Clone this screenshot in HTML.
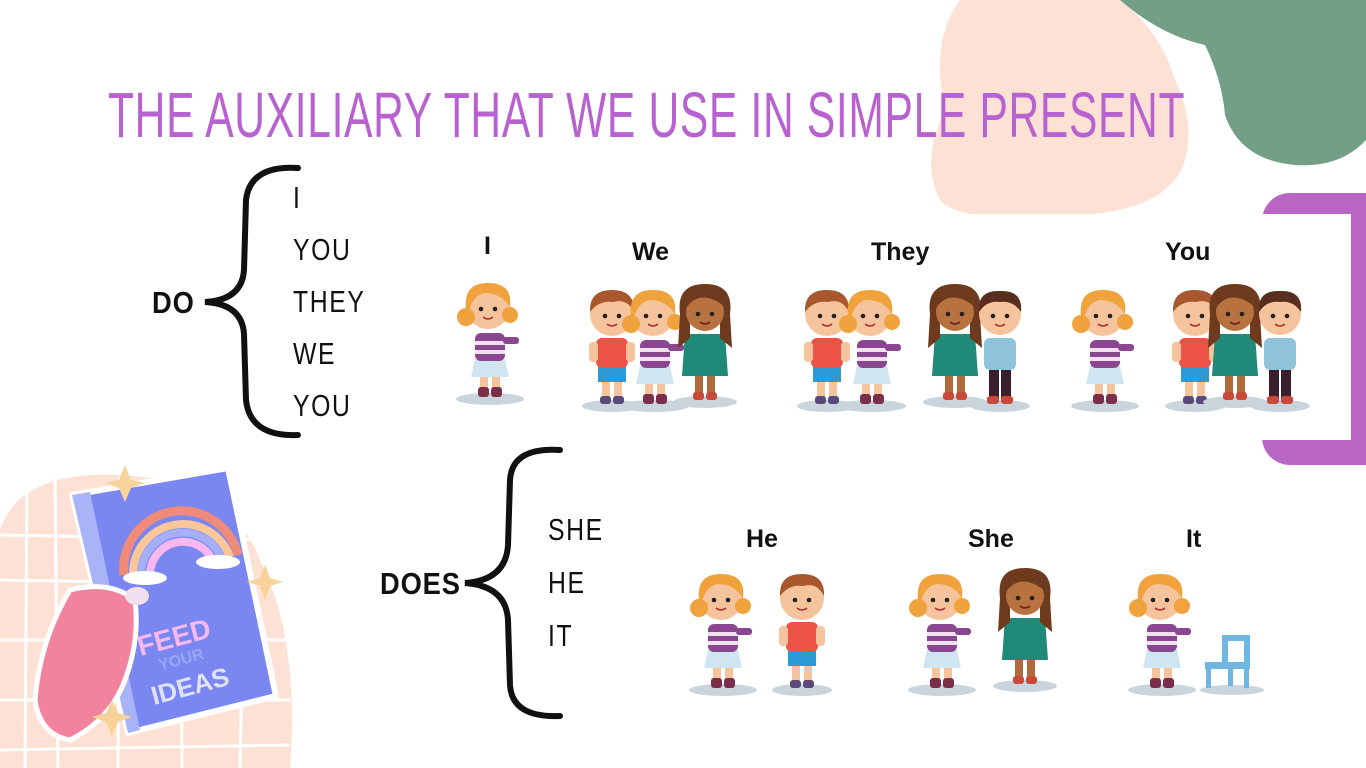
<!DOCTYPE html>
<html><head><meta charset="utf-8"><style>
*{margin:0;padding:0;box-sizing:border-box}
body{width:1366px;height:768px;overflow:hidden;background:#fff;position:relative;font-family:"Liberation Sans",sans-serif}
.t{position:absolute;font-family:"Liberation Sans Narrow","Liberation Sans",sans-serif;color:#111;font-size:31px;letter-spacing:2px;font-weight:300;transform-origin:0 0;transform:scaleX(0.8);white-space:nowrap}
.b{font-weight:bold;letter-spacing:1px;transform:scaleX(0.88)}
.title{position:absolute;left:108px;top:78px;font-family:"Liberation Sans Narrow","Liberation Sans",sans-serif;font-size:64px;color:#b862cf;white-space:nowrap;transform-origin:0 0;transform:scaleX(0.665);letter-spacing:1px}
.lab{position:absolute;font-family:"Liberation Sans",sans-serif;font-weight:bold;font-size:25px;color:#111}
svg{position:absolute;left:0;top:0}
</style></head><body>
<svg width="1366" height="768">
<defs>
<symbol id="girl" viewBox="0 0 70 130">
<ellipse cx="35" cy="124" rx="34" ry="6" fill="#c9d4dc"/>
<rect x="25" y="98" width="8" height="22" fill="#f6c49c"/><rect x="37" y="98" width="8" height="22" fill="#f6c49c"/>
<rect x="23" y="112" width="11" height="10" rx="3" fill="#7b2e4a"/><rect x="36" y="112" width="11" height="10" rx="3" fill="#7b2e4a"/>
<path d="M20 84 L50 84 L54 102 L16 102Z" fill="#cfe6f2"/>
<rect x="20" y="58" width="30" height="28" rx="6" fill="#8a4690"/>
<rect x="20" y="66" width="30" height="4" fill="#f0e0f0"/><rect x="20" y="75" width="30" height="4" fill="#f0e0f0"/>
<rect x="48" y="62" width="16" height="7" rx="3" fill="#8a4690"/>
<circle cx="33" cy="32" r="22" fill="#f6c49c"/>
<path d="M11 34 Q8 8 33 8 Q58 8 55 32 Q46 18 30 18 Q18 20 14 36Z" fill="#f0a23c"/>
<circle cx="11" cy="42" r="9" fill="#f0a23c"/><circle cx="55" cy="40" r="8" fill="#f0a23c"/>
<circle cx="26" cy="34" r="2.3" fill="#222"/><circle cx="40" cy="34" r="2.3" fill="#222"/>
<path d="M28 42 Q33 46 38 42" stroke="#a33" stroke-width="1.5" fill="none"/>
</symbol>
<symbol id="boy" viewBox="0 0 70 130">
<ellipse cx="35" cy="124" rx="30" ry="6" fill="#c9d4dc"/>
<rect x="25" y="96" width="8" height="24" fill="#f6c49c"/><rect x="37" y="96" width="8" height="24" fill="#f6c49c"/>
<rect x="23" y="114" width="11" height="8" rx="3" fill="#5a4a7a"/><rect x="36" y="114" width="11" height="8" rx="3" fill="#5a4a7a"/>
<rect x="21" y="82" width="28" height="18" fill="#2d9ad8"/>
<rect x="19" y="56" width="32" height="30" rx="6" fill="#ec5346"/>
<rect x="12" y="60" width="9" height="20" rx="4" fill="#f6c49c"/><rect x="49" y="60" width="9" height="20" rx="4" fill="#f6c49c"/>
<circle cx="35" cy="32" r="22" fill="#f6c49c"/>
<path d="M13 30 Q12 8 35 8 Q58 8 57 30 Q50 16 36 20 Q22 18 13 30Z" fill="#a9582e"/>
<circle cx="28" cy="34" r="2.3" fill="#222"/><circle cx="42" cy="34" r="2.3" fill="#222"/>
<path d="M30 42 Q35 46 40 42" stroke="#a33" stroke-width="1.5" fill="none"/>
</symbol>
<symbol id="dgirl" viewBox="0 0 70 130">
<ellipse cx="35" cy="124" rx="32" ry="6" fill="#c9d4dc"/>
<rect x="25" y="94" width="8" height="26" fill="#b06a3c"/><rect x="37" y="94" width="8" height="26" fill="#b06a3c"/>
<rect x="23" y="114" width="11" height="8" rx="3" fill="#c8483a"/><rect x="36" y="114" width="11" height="8" rx="3" fill="#c8483a"/>
<path d="M15 56 L55 56 L58 98 L12 98Z" fill="#1f8a78"/>
<path d="M10 36 Q6 6 35 6 Q64 6 60 36 L62 70 L50 60 L50 30 L20 30 L20 60 L8 70Z" fill="#6e3a1e"/>
<circle cx="35" cy="34" r="19" fill="#b8723f"/>
<path d="M16 30 Q30 10 54 28 Q50 14 35 12 Q20 14 16 30Z" fill="#6e3a1e"/>
<circle cx="28" cy="36" r="2.3" fill="#222"/><circle cx="42" cy="36" r="2.3" fill="#222"/>
<path d="M30 44 Q35 48 40 44" stroke="#622" stroke-width="1.5" fill="none"/>
</symbol>
<symbol id="boy2" viewBox="0 0 70 130">
<ellipse cx="35" cy="124" rx="30" ry="6" fill="#c9d4dc"/>
<rect x="24" y="84" width="10" height="36" fill="#3c1f2c"/><rect x="36" y="84" width="10" height="36" fill="#3c1f2c"/>
<rect x="22" y="114" width="12" height="8" rx="3" fill="#c8483a"/><rect x="36" y="114" width="12" height="8" rx="3" fill="#c8483a"/>
<rect x="19" y="56" width="32" height="32" rx="6" fill="#8ec3da"/>
<circle cx="35" cy="32" r="21" fill="#f6c49c"/>
<path d="M14 30 Q12 8 35 9 Q58 8 56 30 Q48 18 35 20 Q22 18 14 30Z" fill="#5a2e1e"/>
<circle cx="28" cy="34" r="2.3" fill="#222"/><circle cx="42" cy="34" r="2.3" fill="#222"/>
<path d="M30 42 Q35 46 40 42" stroke="#a33" stroke-width="1.5" fill="none"/>
</symbol>
</defs>
<path d="M960 0 Q930 40 945 110 Q920 160 940 200 Q960 225 1080 215 Q1170 210 1185 160 Q1195 120 1175 80 Q1160 30 1120 0Z" fill="#fde1d5"/>
<path d="M1120 0 Q1160 35 1205 45 Q1222 80 1225 115 Q1240 160 1295 165 Q1340 168 1366 140 L1366 0Z" fill="#739f87"/>
<rect x="1262" y="193" width="140" height="272" rx="28" fill="#b965c4"/>
<rect x="440" y="214" width="911" height="226" fill="#fff"/>
<path d="M0 530 Q20 470 120 475 Q230 480 260 560 Q300 640 290 768 L0 768Z" fill="#fde1d5"/>
<g stroke="#fff" stroke-width="3" fill="none">
<path d="M27 480 L25 768 M55 475 L58 768 M120 476 L118 768 M180 480 L182 768 M245 520 L240 768"/>
<path d="M0 535 L280 540 M0 580 L290 585 M0 640 L290 640 M0 700 L290 700 M0 750 L290 745"/>
</g>
<path d="M72 495 L228 468 L276 696 L128 733Z" fill="#7b87f1" stroke="#fff" stroke-width="6" stroke-linejoin="round"/>
<path d="M72 495 L90 492 L140 730 L128 733Z" fill="#a9b3f8"/>
<path d="M124 575 A58 58 0 0 1 238 555" stroke="#f08a7a" stroke-width="9" fill="none"/>
<path d="M133 575 A50 50 0 0 1 230 557" stroke="#f9c79a" stroke-width="8" fill="none"/>
<path d="M141 575 A42 42 0 0 1 222 559" stroke="#a5aef9" stroke-width="8" fill="none"/>
<path d="M150 575 A33 33 0 0 1 213 561" stroke="#f6b8ee" stroke-width="8" fill="none"/>
<ellipse cx="145" cy="578" rx="22" ry="7" fill="#fff"/><ellipse cx="218" cy="562" rx="22" ry="7" fill="#fff"/>
<path d="M70 590 Q110 580 135 600 Q140 640 125 680 Q110 720 70 740 Q40 735 35 700 Q40 640 70 590Z" fill="#f2839f" stroke="#fff" stroke-width="5"/>
<ellipse cx="137" cy="596" rx="12" ry="9" fill="#f3e0ee"/>
<text x="135" y="645" font-family="Liberation Sans" font-weight="bold" font-size="28" fill="#f6b8ee" transform="rotate(-15 180 630)">FEED</text>
<text x="158" y="665" font-family="Liberation Sans" font-weight="bold" font-size="16" fill="#9aa4f7" transform="rotate(-15 180 660)">YOUR</text>
<text x="150" y="695" font-family="Liberation Sans" font-weight="bold" font-size="26" fill="#dfe3ff" transform="rotate(-15 190 685)">IDEAS</text>
<g fill="#f7d399"><path d="M125 465 L131 480 L145 483 L131 488 L125 502 L119 488 L105 483 L119 480Z"/><path d="M265 565 L270 578 L283 582 L270 586 L265 600 L260 586 L247 582 L260 578Z"/><path d="M112 700 L118 713 L132 717 L118 722 L112 736 L106 722 L92 717 L106 713Z"/></g>
<g stroke="#111" stroke-width="6" fill="none" stroke-linecap="round">
<path d="M298 168 Q250 165 246 200 L244 270 Q242 300 205 302 Q242 304 244 334 L246 400 Q250 437 298 435"/>
<path d="M560 450 Q512 447 510 480 L508 545 Q506 580 465 583 Q506 586 508 620 L510 685 Q512 718 560 716"/>
</g>
<use href="#girl" x="455" y="275" width="70" height="130"/>
<use href="#boy" x="577" y="282" width="70" height="130"/>
<use href="#girl" x="620" y="282" width="70" height="130"/>
<use href="#dgirl" x="670" y="278" width="70" height="130"/>
<use href="#boy" x="792" y="282" width="70" height="130"/>
<use href="#girl" x="837" y="282" width="70" height="130"/>
<use href="#dgirl" x="920" y="278" width="70" height="130"/>
<use href="#boy2" x="965" y="282" width="70" height="130"/>
<use href="#girl" x="1070" y="282" width="70" height="130"/>
<use href="#boy" x="1160" y="282" width="70" height="130"/>
<use href="#dgirl" x="1200" y="278" width="70" height="130"/>
<use href="#boy2" x="1245" y="282" width="70" height="130"/>
<use href="#girl" x="688" y="566" width="70" height="130"/>
<use href="#boy" x="767" y="566" width="70" height="130"/>
<use href="#girl" x="907" y="566" width="70" height="130"/>
<use href="#dgirl" x="990" y="562" width="70" height="130"/>
<use href="#girl" x="1127" y="566" width="70" height="130"/>
<ellipse cx="1232" cy="690" rx="32" ry="5" fill="#c9d4dc"/>
<g fill="#6fb6e0"><rect x="1222" y="635" width="6" height="30"/><rect x="1244" y="635" width="6" height="30"/><rect x="1222" y="635" width="28" height="6"/><rect x="1205" y="662" width="45" height="7"/><rect x="1206" y="668" width="5" height="20"/><rect x="1244" y="668" width="5" height="20"/><rect x="1228" y="668" width="5" height="18"/></g>
</svg>
<div class="title">THE AUXILIARY THAT WE USE IN SIMPLE PRESENT</div>
<div class="t b" style="left:152px;top:285px">DO</div>
<div class="t" style="left:293px;top:180px">I</div>
<div class="t" style="left:293px;top:232px">YOU</div>
<div class="t" style="left:293px;top:284px">THEY</div>
<div class="t" style="left:293px;top:336px">WE</div>
<div class="t" style="left:293px;top:388px">YOU</div>
<div class="t b" style="left:380px;top:566px">DOES</div>
<div class="t" style="left:548px;top:512px">SHE</div>
<div class="t" style="left:548px;top:565px">HE</div>
<div class="t" style="left:548px;top:618px">IT</div>
<div class="lab" style="left:484px;top:232px">I</div>
<div class="lab" style="left:632px;top:238px">We</div>
<div class="lab" style="left:871px;top:238px">They</div>
<div class="lab" style="left:1165px;top:238px">You</div>
<div class="lab" style="left:746px;top:525px">He</div>
<div class="lab" style="left:968px;top:525px">She</div>
<div class="lab" style="left:1186px;top:525px">It</div>
</body></html>
